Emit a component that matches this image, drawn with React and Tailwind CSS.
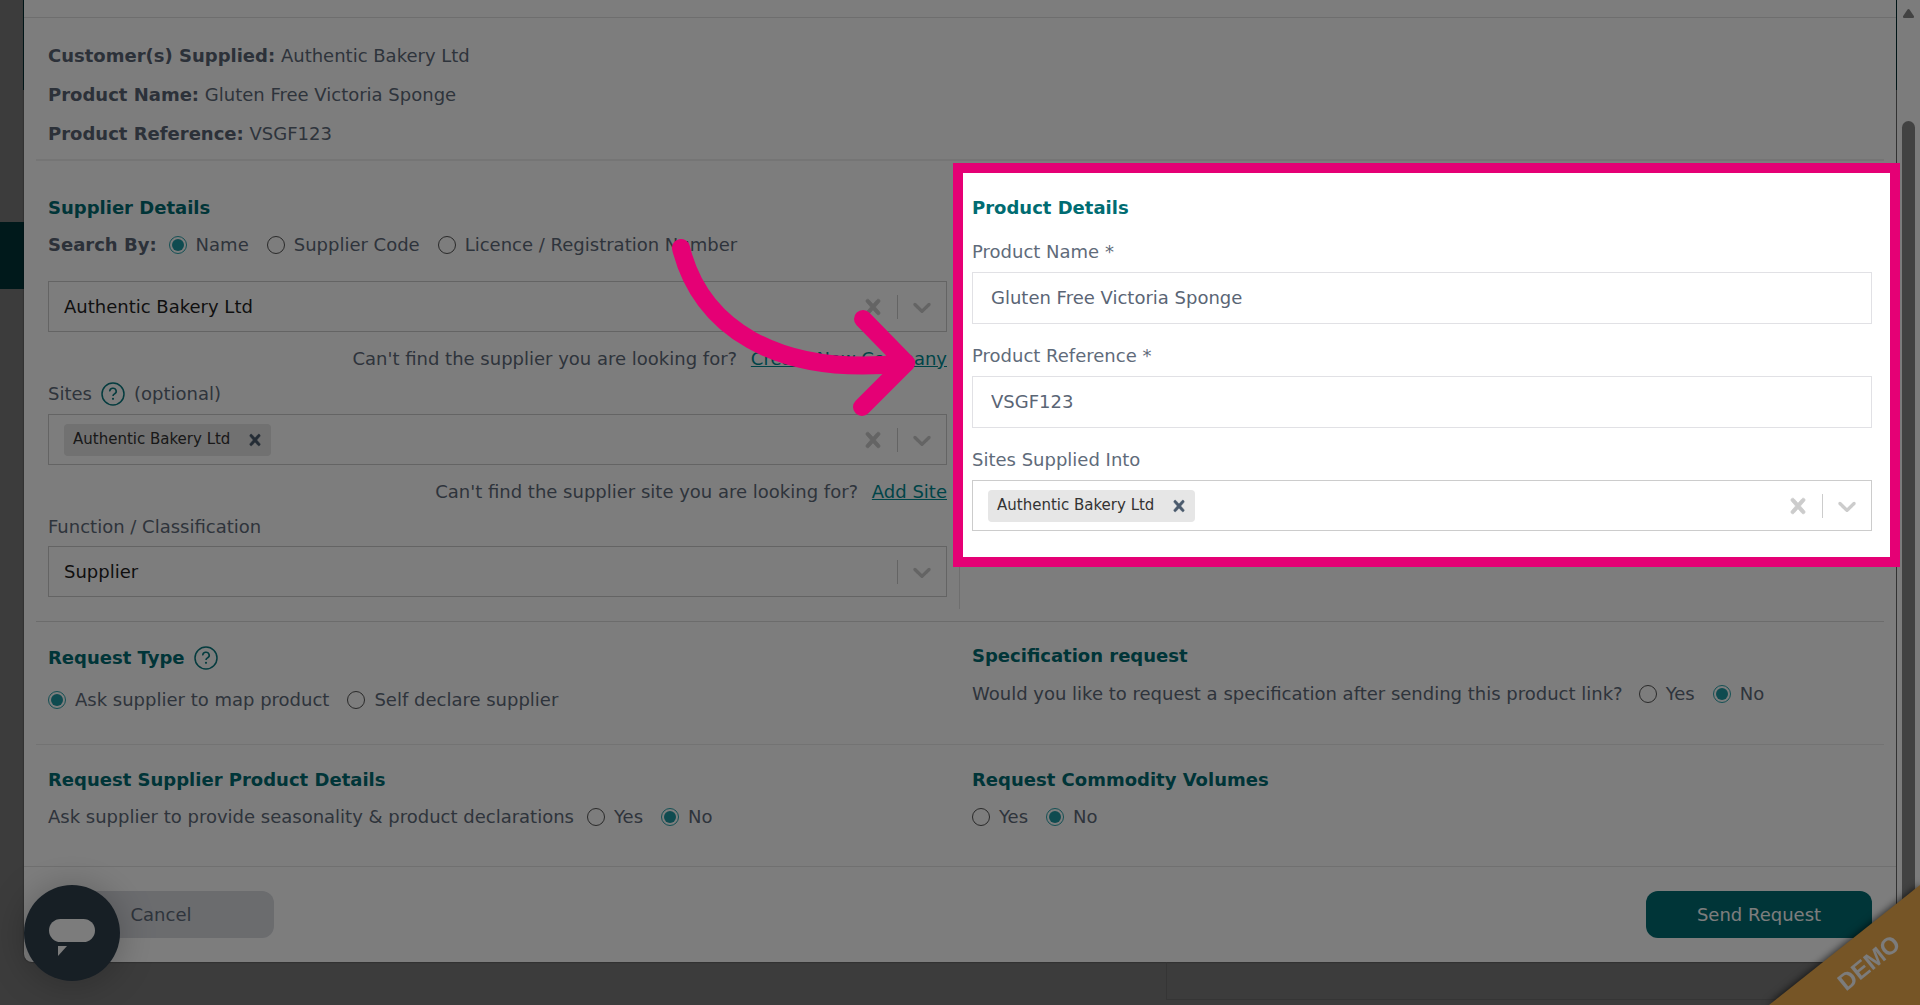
import React from "react";

function ClearIcon({ size = 30 }) {
  return (
    <svg width={size} height={size} viewBox="0 0 20 20" fill="currentColor" stroke="currentColor" strokeWidth="0.5" aria-hidden="true">
      <path d="M14.348 14.849c-0.469 0.469-1.229 0.469-1.697 0l-2.651-3.030-2.651 3.029c-0.469 0.469-1.229 0.469-1.697 0-0.469-0.469-0.469-1.229 0-1.697l2.758-3.15-2.759-3.152c-0.469-0.469-0.469-1.228 0-1.697s1.228-0.469 1.697 0l2.652 3.031 2.651-3.031c0.469-0.469 1.228-0.469 1.697 0s0.469 1.229 0 1.697l-2.758 3.152 2.758 3.15c0.469 0.469 0.469 1.229 0 1.698z" />
    </svg>
  );
}

function ChevronIcon() {
  return (
    <svg width="30" height="30" viewBox="0 0 20 20" fill="currentColor" aria-hidden="true">
      <path d="M4.516 7.548c0.436-0.446 1.043-0.481 1.576 0l3.908 3.747 3.908-3.747c0.533-0.481 1.141-0.446 1.574 0 0.436 0.445 0.408 1.197 0 1.615-0.406 0.418-4.695 4.502-4.695 4.502-0.217 0.223-0.502 0.335-0.787 0.335s-0.57-0.112-0.789-0.335c0 0-4.287-4.084-4.695-4.502s-0.436-1.17 0-1.615z" />
    </svg>
  );
}

function HelpIcon() {
  return (
    <button type="button" aria-label="Help" className="mx-[9px] inline-flex align-middle text-[#0a7a80]">
      <svg width="24" height="24" viewBox="0 0 24 24" fill="none" stroke="currentColor" aria-hidden="true">
        <circle cx="12" cy="12" r="11" strokeWidth="1.5" />
        <path d="M8.800 9.400a3.200 3 0 1 1 4.900 2.400c-1 .7-1.700 1.100-1.700 2.200" strokeWidth="1.6" />
        <circle cx="12" cy="16.800" r="1.100" fill="currentColor" stroke="none" />
      </svg>
    </button>
  );
}

function SelectBox({ label, value, chip, clearable = true }) {
  return (
    <div role="group" aria-label={label} className="flex h-[51px] items-center border border-[#ccc] bg-white pl-[15px]">
      <div className="flex flex-1 items-center">
        {chip ? (
          <span className="flex h-8 items-center rounded-sm bg-[#e6e6e6] pl-[9px] text-[15px] text-[#333]">
            {value}
            <button type="button" aria-label={`Remove ${value}`} className="ml-[9px] flex size-8 items-center justify-center text-[#4a5a6c]">
              <ClearIcon size={22} />
            </button>
          </span>
        ) : (
          <span className="text-[#1f1f1f]">{value}</span>
        )}
      </div>
      {clearable && (
        <button type="button" aria-label="Clear" className="px-[9px] text-[#ccc]">
          <ClearIcon />
        </button>
      )}
      <span className="h-6 w-px bg-[#ccc]" />
      <button type="button" aria-label="Open" className="px-[9px] text-[#ccc]">
        <ChevronIcon />
      </button>
    </div>
  );
}

function Radio({ name, label, checked }) {
  return (
    <label className="mr-[18px] inline-flex items-center gap-[9px]">
      <input
        type="radio"
        name={name}
        defaultChecked={checked}
        className="size-[18px] appearance-none rounded-full border border-[#555] bg-white checked:border-[#2ba3ac] checked:bg-[#1f9aa3] checked:bg-clip-content checked:p-[2px]"
      />
      {label}
    </label>
  );
}

function Heading({ children }) {
  return <h2 className="flex h-6 items-center font-bold text-[#006c72]">{children}</h2>;
}

function Fact({ label, value }) {
  return (
    <p className="leading-[39px]">
      <strong className="text-[#5a6575]">{label}</strong> {value}
    </p>
  );
}

function Spotlight() {
  return (
    <div className="pointer-events-none absolute -top-[22px] -right-7 -left-[19px] z-30 h-[404px] border-[10px] border-[#e50075] shadow-[0_0_0_2400px_rgba(0,0,0,0.51)]" />
  );
}

function Pointer() {
  return (
    <svg
      className="pointer-events-none absolute top-[46px] -left-[300px] z-40"
      width="250"
      height="190"
      viewBox="0 0 250 190"
      fill="none"
      stroke="#e50075"
      strokeWidth="18"
      strokeLinecap="round"
      strokeLinejoin="round"
      aria-hidden="true"
    >
      <path d="M9 17 C28 94 102 147 234 132" />
      <path d="M191 88 L234 132 L190 176" />
    </svg>
  );
}

function TextField({ id, label, value }) {
  return (
    <div className="mb-5">
      <label htmlFor={id} className="block h-8 leading-6">{label}</label>
      <input id={id} defaultValue={value} className="h-[52px] w-full border border-[#e1e1e5] bg-white px-[18px] pb-0.5 text-[#5a6575] outline-none" />
    </div>
  );
}

export default function App() {
  return (
    <div className="relative flex min-h-screen overflow-hidden bg-[#7a7a7a] font-['DejaVu_Sans',sans-serif] text-lg text-[#5f6b7a]">
      <aside className="flex w-[23px] flex-col">
        <div className="mt-[222px] h-[67px] w-6 bg-[#003438]" />
      </aside>
      <div className="flex min-w-0 flex-1 flex-col">
        <main className="bg-[linear-gradient(#003438_90px,transparent_90px)] px-px">
          <div className="rounded-b-lg bg-white shadow-[0_0_2px_rgba(0,0,0,0.6)]">
            <header className="h-[18px] border-b border-[#e0e0e0]" />
            <form className="px-3" onSubmit={(e) => e.preventDefault()}>
              <section className="h-[143px] border-b-2 border-[#eee] px-3 pt-[18px]">
                <Fact label="Customer(s) Supplied:" value="Authentic Bakery Ltd" />
                <Fact label="Product Name:" value="Gluten Free Victoria Sponge" />
                <Fact label="Product Reference:" value="VSGF123" />
              </section>

              <section className="grid grid-cols-2 border-b border-[#dcdcdc] pt-[11px] pb-3">
                <div className="border-r border-[#e0e0e0] px-3 pt-6 pb-3">
                  <Heading>Supplier Details</Heading>
                  <div className="mt-[13px] flex h-6 items-center">
                    <strong className="mr-3 text-[#5a6575]">Search By:</strong>
                    <Radio name="search" label="Name" checked />
                    <Radio name="search" label="Supplier Code" />
                    <Radio name="search" label="Licence / Registration Number" />
                  </div>
                  <div className="mt-6">
                    <SelectBox label="Supplier" value="Authentic Bakery Ltd" />
                  </div>
                  <p className="mt-[15px] h-6 text-right leading-6">
                    Can't find the supplier you are looking for? <a href="#company" className="ml-2 text-[#008c94] underline">Create New Company</a>
                  </p>
                  <p className="mt-[7px] flex h-8 items-center">Sites <HelpIcon /> (optional)</p>
                  <div className="mt-1">
                    <SelectBox label="Sites" value="Authentic Bakery Ltd" chip />
                  </div>
                  <p className="mt-[15px] h-6 text-right leading-6">
                    Can't find the supplier site you are looking for? <a href="#site" className="ml-2 text-[#008c94] underline">Add Site</a>
                  </p>
                  <p className="mt-[11px] h-6 leading-6">Function / Classification</p>
                  <div className="mt-[7px]">
                    <SelectBox label="Function / Classification" value="Supplier" clearable={false} />
                  </div>
                </div>
                <div className="relative px-3 pt-6">
                  <Heading>Product Details</Heading>
                  <div className="mt-5">
                    <TextField id="product-name" label="Product Name *" value="Gluten Free Victoria Sponge" />
                    <TextField id="product-reference" label="Product Reference *" value="VSGF123" />
                    <p className="h-8 leading-6">Sites Supplied Into</p>
                    <SelectBox label="Sites Supplied Into" value="Authentic Bakery Ltd" chip />
                  </div>
                  <div className="absolute inset-x-3 top-[13px]">
                    <Spotlight />
                    <Pointer />
                  </div>
                </div>
              </section>

              <section className="grid h-[123px] grid-cols-2 border-b border-[#eaeaea]">
                <div className="px-3 pt-6">
                  <Heading>Request Type <HelpIcon /></Heading>
                  <div className="mt-[18px] flex h-6 items-center">
                    <Radio name="type" label="Ask supplier to map product" checked />
                    <Radio name="type" label="Self declare supplier" />
                  </div>
                </div>
                <div className="px-3 pt-[22px]">
                  <Heading>Specification request</Heading>
                  <div className="mt-[14px] flex h-6 items-center">
                    <span className="mr-4">Would you like to request a specification after sending this product link?</span>
                    <Radio name="spec" label="Yes" />
                    <Radio name="spec" label="No" checked />
                  </div>
                </div>
              </section>

              <section className="grid h-[121px] grid-cols-2">
                <div className="px-3 pt-[23px]">
                  <Heading>Request Supplier Product Details</Heading>
                  <div className="mt-[13px] flex h-6 items-center">
                    <span className="mr-[13px]">Ask supplier to provide seasonality &amp; product declarations</span>
                    <Radio name="details" label="Yes" />
                    <Radio name="details" label="No" checked />
                  </div>
                </div>
                <div className="px-3 pt-[23px]">
                  <Heading>Request Commodity Volumes</Heading>
                  <div className="mt-[13px] flex h-6 items-center">
                    <Radio name="volumes" label="Yes" />
                    <Radio name="volumes" label="No" checked />
                  </div>
                </div>
              </section>
            </form>
            <footer className="flex h-[96px] items-center justify-between border-t border-[#e4e4e4] px-6">
              <button type="button" className="h-[47px] w-[226px] rounded-xl bg-[#dadce1]">Cancel</button>
              <button type="button" className="h-[47px] w-[226px] rounded-xl bg-[#006c72] text-white">Send Request</button>
            </footer>
          </div>
        </main>
        <div className="mb-[5px] ml-[61%] flex-1 border-b border-l border-[#6c6c6c]" />
      </div>
      <div className="flex w-[23px] flex-col items-center bg-[#fcfcfc]" aria-hidden="true">
        <svg width="13" height="20" viewBox="0 0 13 20" className="mb-[101px]" fill="#888">
          <path d="M6.500 9 Q7.300 9 7.800 10 L12 16.200 Q12.500 18 11 18 H2 Q.500 18 1 16.200 L5.200 10 Q5.700 9 6.500 9Z" />
        </svg>
        <div className="w-[13px] flex-1 rounded-t-full bg-[#888]" />
      </div>

      <button type="button" aria-label="Open chat" className="absolute bottom-6 left-6 z-20 size-24 rounded-full bg-[#2f3f4d] shadow-[0_2px_36px_rgba(0,0,0,0.25)]">
        <svg viewBox="0 0 96 96" fill="#fcfcfc" className="size-24" aria-hidden="true">
          <rect x="25" y="34" width="46" height="23" rx="11.500" />
          <path d="M34 61 H43 L34 71Z" />
        </svg>
      </button>

      <div className="absolute right-0 bottom-0 z-20 h-[120px] w-[151px] drop-shadow-[0_0_4px_rgba(0,0,0,0.8)]">
        <div className="flex h-full w-full items-center justify-center bg-[#f0ad4e] [clip-path:polygon(100%_0,100%_100%,0_100%)]">
          <span className="mt-9 ml-12 -rotate-[39deg] font-['Liberation_Sans',sans-serif] text-2xl font-bold text-[#fcfcfc]">DEMO</span>
        </div>
      </div>
    </div>
  );
}
